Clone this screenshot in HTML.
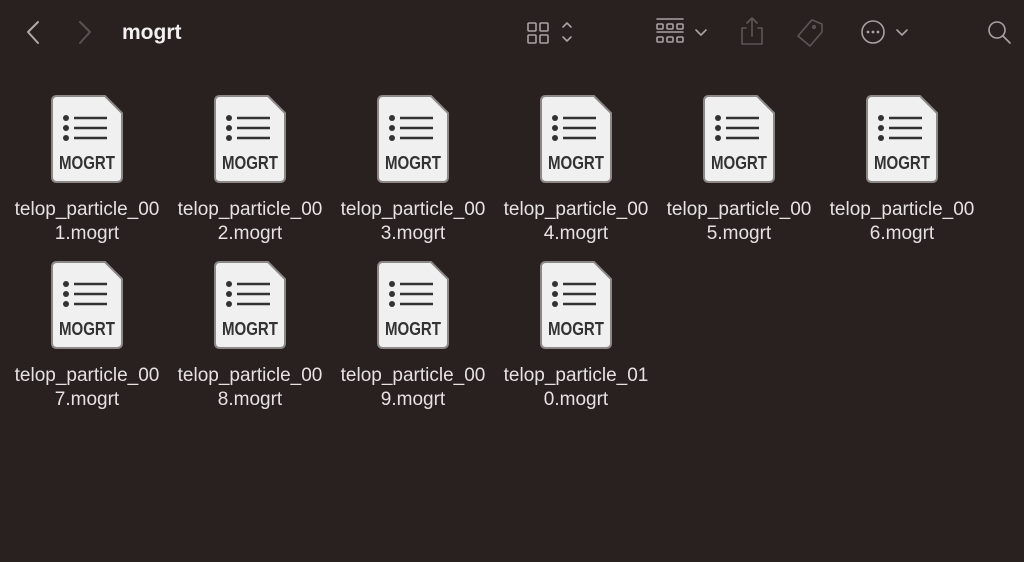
<!DOCTYPE html>
<html><head><meta charset="utf-8"><style>
body{margin:0;width:1024px;height:562px;background:#292020;font-family:"Liberation Sans",sans-serif;overflow:hidden;position:relative}
.t{position:absolute;top:21px;left:122px;color:#f2f0f0;font-weight:bold;font-size:21px}
.it{position:absolute;width:163px;text-align:center;color:#e6e2e2;font-size:19px;line-height:24px;white-space:nowrap}
.it svg{display:block;margin:0 auto 15px}
svg.ic{position:absolute}
</style></head><body>
<svg class="ic" style="left:0;top:0" width="1024" height="70" fill="none" stroke-linecap="round" stroke-linejoin="round">
<path d="M38 22 L28 32 L38 43" stroke="#b0aaaa" stroke-width="2"/>
<path d="M80 22 L90 32 L80 43" stroke="#5a5252" stroke-width="2"/>
<g stroke="#a8a2a2" stroke-width="1.6"><rect x="528" y="23" width="8" height="8" rx="1"/><rect x="540" y="23" width="8" height="8" rx="1"/><rect x="528" y="35" width="8" height="8" rx="1"/><rect x="540" y="35" width="8" height="8" rx="1"/>
<path d="M563 27 L567 23 L571 27 M563 37 L567 41 L571 37"/>
<path d="M657 19 H683 M657 32 H683"/>
<rect x="657" y="24" width="6" height="5" rx="1"/><rect x="667" y="24" width="6" height="5" rx="1"/><rect x="677" y="24" width="6" height="5" rx="1"/>
<rect x="657" y="37" width="6" height="5" rx="1"/><rect x="667" y="37" width="6" height="5" rx="1"/><rect x="677" y="37" width="6" height="5" rx="1"/>
<path d="M696 30 L701 35 L706 30"/>
<circle cx="873" cy="32" r="11"/><path d="M897 30 L902 35 L907 30"/>
<circle cx="997" cy="30" r="8"/><path d="M1003 36 L1010 43"/></g>
<g fill="#a8a2a2"><circle cx="868" cy="32" r="1.4"/><circle cx="873" cy="32" r="1.4"/><circle cx="878" cy="32" r="1.4"/></g>
<g stroke="#5e5656" stroke-width="1.6"><path d="M746 28 H742 V44 H762 V28 H758 M752 36 V18 M747 23 L752 18 L757 23"/>
<path d="M812 20 L822 24 L822 32 L810 46 L798 36 L810 22 Z"/><circle cx="814" cy="27" r="1.3"/></g>
</svg>
<div class="t">mogrt</div>
<div id="c"></div>
<script>
var names=["001","002","003","004","005","006","007","008","009","010"];
var icon='<svg width="72" height="88" viewBox="0 0 72 88"><path d="M6 1 H54 L71 18 V82 Q71 87 66 87 H6 Q1 87 1 82 V6 Q1 1 6 1 Z" fill="#f1f0f0" stroke="#8c8888" stroke-width="2"/><g fill="#333"><circle cx="15" cy="23" r="3"/><circle cx="15" cy="33" r="3"/><circle cx="15" cy="43" r="3"/></g><g stroke="#333" stroke-width="2.5"><path d="M23 23H56M23 33H56M23 43H56"/></g><text x="8" y="74" textLength="56" lengthAdjust="spacingAndGlyphs" font-family="Liberation Sans,sans-serif" font-weight="bold" font-size="18" fill="#333">MOGRT</text></svg>';
var h='';
names.forEach(function(n,i){var c=i%6,r=Math.floor(i/6);
h+='<div class="it" style="left:'+(5.5+c*163)+'px;top:'+(95+r*166)+'px">'+icon+'telop_particle_'+n.slice(0,2)+'<br>'+n.slice(2)+'.mogrt</div>';});
document.getElementById('c').innerHTML=h;
</script>
</body></html>
